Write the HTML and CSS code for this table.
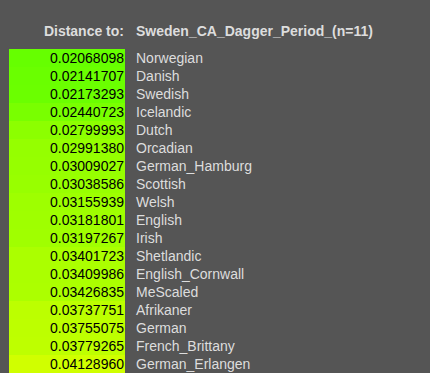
FILE: index.html
```html
<!DOCTYPE html>
<html lang="en">
<head>
    <meta charset="UTF-8">
    <title>Distance</title>
    <link rel="stylesheet" href="styles.css">
</head>
<body>
<div id="result" class="dist">
    <div class="head">
        <span class="col-val">Distance to:</span>
        <span class="col-name">Sweden_CA_Dagger_Period_(n=11)</span>
    </div>
    <div id="rows"></div>
</div>

<script>
    var data = [
        [0.02068098, "Norwegian"],
        [0.02141707, "Danish"],
        [0.02173293, "Swedish"],
        [0.02440723, "Icelandic"],
        [0.02799993, "Dutch"],
        [0.02991380, "Orcadian"],
        [0.03009027, "German_Hamburg"],
        [0.03038586, "Scottish"],
        [0.03155939, "Welsh"],
        [0.03181801, "English"],
        [0.03197267, "Irish"],
        [0.03401723, "Shetlandic"],
        [0.03409986, "English_Cornwall"],
        [0.03426835, "MeScaled"],
        [0.03737751, "Afrikaner"],
        [0.03755075, "German"],
        [0.03779265, "French_Brittany"],
        [0.04128960, "German_Erlangen"]
    ];

    var rows = document.getElementById("rows");
    var html = "";
    //颜色：距离越大越偏黄
    for (var i = 0; i < data.length; i++) {
        var d = data[i][0];
        var r = Math.round(102 + (d - 0.02068098) / (0.04128960 - 0.02068098) * 106);
        html += '<div class="row">'
            + '<span class="col-val" style="background: rgb(' + r + ',255,0)">' + d.toFixed(8) + '</span>'
            + '<span class="col-name">' + data[i][1] + '</span>'
            + '</div>';
    }
    rows.innerHTML = html;
</script>

</body>
</html>
```

FILE: styles.css
```css
body {
    margin: 0;
    padding: 22px 0 0 9px;
    background: #555555;
    font-family: "Liberation Sans", Arial, sans-serif;
    font-size: 14px;
    line-height: 18px;
    color: #dddddd;
}

.head,
.row {
    display: flex;
    height: 18px;
    white-space: nowrap;
}

.head {
    font-weight: bold;
    margin-bottom: 9px;
}

.col-val {
    width: 116px;
    flex: none;
    box-sizing: border-box;
    padding-right: 1px;
    text-align: right;
}

.row .col-val {
    color: #000;
}

.col-name {
    padding-left: 11px;
}
```
